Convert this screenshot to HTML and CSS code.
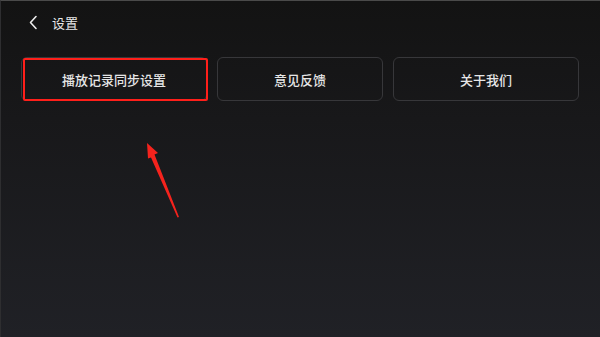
FILE: index.html
```html
<!DOCTYPE html>
<html lang="zh-CN">
<head>
    <meta charset="UTF-8">
    <meta name="viewport" content="width=device-width, initial-scale=1.0">
    <title>设置</title>
    <link rel="stylesheet" href="styles.css">
</head>
<body>
    <div class="screen">
        <div class="header">
            <svg class="back" width="11" height="15" viewBox="0 0 11 15">
                <polyline points="8,1.5 2.5,7.5 8,13.5" fill="none" stroke="#ececec" stroke-width="1.6" stroke-linecap="round" stroke-linejoin="round"/>
            </svg>
            <span class="title">设置</span>
        </div>
        <div class="options">
            <div class="option marked">
                播放记录同步设置
                <span class="mark"></span>
            </div>
            <div class="option">意见反馈</div>
            <div class="option">关于我们</div>
        </div>
        <!-- annotation arrow pointing at the first option -->
        <svg class="arrow" width="60" height="90" viewBox="0 0 60 90">
            <polygon points="6,3 17,13 13.5,14.5 38,77 36.5,77.5 10,17.5 7,18.5" fill="#f5231d"/>
        </svg>
    </div>
</body>
</html>
```

FILE: styles.css
```css
body {
    margin: 0;
    padding: 0;
    background: #131313;
    font-family: "Noto Sans CJK SC", "Noto Sans", sans-serif;
}
.screen {
    position: relative;
    width: 600px;
    height: 337px;
    box-sizing: border-box;
    border-top: 1px solid #4a4a4a;
    border-left: 1px solid #2e2e30;
    background: linear-gradient(to bottom, #131313 0%, #18181a 35%, #202126 100%);
    overflow: hidden;
}
.header {
    display: flex;
    align-items: center;
    height: 43px;
    padding-left: 27px;
    color: #e8e8e8;
}
.back {
    display: block;
}
.title {
    margin-left: 13px;
    font-size: 13px;
    line-height: 1;
}
.options {
    display: grid;
    grid-template-columns: 186px 166px 186px;
    column-gap: 10px;
    margin-top: 13px;
    padding-left: 20px;
}
.option {
    position: relative;
    height: 44px;
    box-sizing: border-box;
    border: 1px solid #37373a;
    border-radius: 6px;
    display: flex;
    align-items: center;
    justify-content: center;
    color: #e6e6e6;
    font-size: 13px;
    font-weight: 500;
}
.mark {
    position: absolute;
    left: 1px;
    top: 0px;
    right: -2px;
    bottom: -1px;
    border: 2.5px solid #ff1f1a;
    border-radius: 2px;
}
.arrow {
    position: absolute;
    left: 140px;
    top: 139px;
}
```
